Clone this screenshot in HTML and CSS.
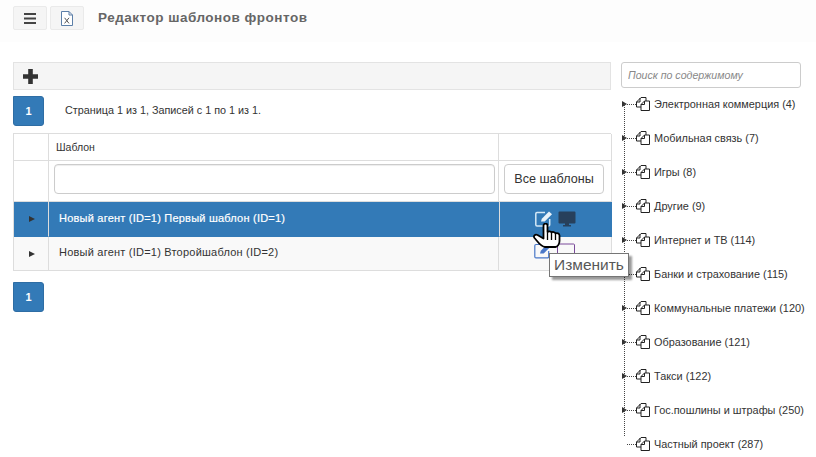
FILE: index.html
```html
<!DOCTYPE html>
<html lang="ru">
<head>
<meta charset="utf-8">
<title>Редактор шаблонов фронтов</title>
<link rel="stylesheet" href="styles.css">
</head>
<body>
<svg class="defs" width="0" height="0"><defs>
  <g id="doc"><path d="M.5 5L5 .5h5V4M.5 5v5H5M.5 5H4V1" stroke="#222" fill="#fff"/><path d="M5 7.500L8.500 4h5v9.500H5zM5 7.500h3.500V4" stroke="#222" fill="#fff"/></g>
</defs></svg>
<header class="topbar">
  <button class="tool-btn" type="button" aria-label="Меню">
    <svg width="12" height="11" viewBox="0 0 12 11"><path d="M0 1h12M0 5.500h12M0 10h12" stroke="#444" stroke-width="2" fill="none"/></svg>
  </button>
  <button class="tool-btn" type="button" aria-label="Excel">
    <svg width="12" height="15" viewBox="0 0 12 15"><path d="M.5.500h7.500l3.500 3.500v10.500H.5z M8 .5V4h3.500" stroke="#5c7fa8" fill="#fff"/><path d="M3.600 6.800l4.400 5.600M8 6.800l-4.400 5.600" stroke="#555" stroke-width="1" fill="none"/></svg>
  </button>
  <h1 class="title">Редактор шаблонов фронтов</h1>
</header>
<div class="layout">
  <main class="main">
    <div class="actions">
      <svg width="15" height="15" viewBox="0 0 15 15"><path d="M5.200 0h4.600v5.200H15v4.600H9.800V15H5.200V9.800H0V5.200h5.200z" fill="#333"/></svg>
    </div>
    <div class="pager-row">
      <a class="page">1</a>
      <span class="pager-info">Страница 1 из 1, Записей с 1 по 1 из 1.</span>
    </div>
    <div class="grid">
      <div class="cell head"></div>
      <div class="cell head name">Шаблон</div>
      <div class="cell head"></div>

      <div class="cell filter"></div>
      <div class="cell filter input-cell"><input class="input" type="text"></div>
      <div class="cell filter btn-cell"><button class="all-btn" type="button">Все шаблоны</button></div>

      <div class="cell row active arrow"><i class="tri"></i></div>
      <div class="cell row active name">Новый агент (ID=1) Первый шаблон (ID=1)</div>
      <div class="cell row active icons">
        <svg width="18" height="16" viewBox="0 0 18 16"><path d="M10 1.500H2A1.200 1.200 0 0 0 .8 2.700v11A1.200 1.200 0 0 0 2 14.900h11.500a1.200 1.200 0 0 0 1.200-1.200V8" stroke="#d4e8f6" stroke-width="1.500" fill="none"/><path d="M6 10.500l.8-2.800L14 .5l3 2.700-7.300 7.300z" fill="#e8f2fa"/></svg>
        <svg width="18" height="16" viewBox="0 0 18 16"><path d="M1.500 .5h15a1 1 0 0 1 1 1v10a1 1 0 0 1-1 1h-15a1 1 0 0 1-1-1v-10a1 1 0 0 1 1-1z M7 12.500h4v1.500h2v1.500H5V14h2z" fill="#27405c"/></svg>
      </div>

      <div class="cell row arrow"><i class="tri"></i></div>
      <div class="cell row name second">Новый агент (ID=1) Второйшаблон (ID=2)</div>
      <div class="cell row icons second-icons">
        <svg width="18" height="16" viewBox="0 0 18 16"><path d="M10 1.500H2A1.200 1.200 0 0 0 .8 2.700v11A1.200 1.200 0 0 0 2 14.900h11.500a1.200 1.200 0 0 0 1.200-1.200V8" stroke="#4a78c8" stroke-width="1.200" fill="none"/><path d="M6 10.500l.8-2.800L14 .5l3 2.700-7.300 7.300z" fill="#4a78c8"/></svg>
        <svg width="18" height="16" viewBox="0 0 18 16"><rect x=".5" y="1" width="17" height="11.500" rx="1" stroke="#7a4a9a" fill="none"/></svg>
      </div>
    </div>
    <a class="page bottom">1</a>
  </main>
  <aside class="side">
    <input class="search" type="text" placeholder="Поиск по содержимому">
    <ul class="tree">
      <li class="node"><i class="exp"></i><i class="dash"></i><svg class="doc" width="14" height="14" viewBox="0 0 14 14"><use href="#doc"/></svg><span>Электронная коммерция (4)</span></li>
      <li class="node"><i class="exp"></i><i class="dash"></i><svg class="doc" width="14" height="14" viewBox="0 0 14 14"><use href="#doc"/></svg><span>Мобильная связь (7)</span></li>
      <li class="node"><i class="exp"></i><i class="dash"></i><svg class="doc" width="14" height="14" viewBox="0 0 14 14"><use href="#doc"/></svg><span>Игры (8)</span></li>
      <li class="node"><i class="exp"></i><i class="dash"></i><svg class="doc" width="14" height="14" viewBox="0 0 14 14"><use href="#doc"/></svg><span>Другие (9)</span></li>
      <li class="node"><i class="exp"></i><i class="dash"></i><svg class="doc" width="14" height="14" viewBox="0 0 14 14"><use href="#doc"/></svg><span>Интернет и ТВ (114)</span></li>
      <li class="node"><i class="exp"></i><i class="dash"></i><svg class="doc" width="14" height="14" viewBox="0 0 14 14"><use href="#doc"/></svg><span>Банки и страхование (115)</span></li>
      <li class="node"><i class="exp"></i><i class="dash"></i><svg class="doc" width="14" height="14" viewBox="0 0 14 14"><use href="#doc"/></svg><span>Коммунальные платежи (120)</span></li>
      <li class="node"><i class="exp"></i><i class="dash"></i><svg class="doc" width="14" height="14" viewBox="0 0 14 14"><use href="#doc"/></svg><span>Образование (121)</span></li>
      <li class="node"><i class="exp"></i><i class="dash"></i><svg class="doc" width="14" height="14" viewBox="0 0 14 14"><use href="#doc"/></svg><span>Такси (122)</span></li>
      <li class="node"><i class="exp"></i><i class="dash"></i><svg class="doc" width="14" height="14" viewBox="0 0 14 14"><use href="#doc"/></svg><span>Гос.пошлины и штрафы (250)</span></li>
      <li class="node last"><i class="exp none"></i><i class="dash"></i><svg class="doc" width="14" height="14" viewBox="0 0 14 14"><use href="#doc"/></svg><span>Частный проект (287)</span></li>
    </ul>
  </aside>
</div>
<svg class="cursor" width="30" height="25" viewBox="0 0 30 25"><path d="M10.500 2.500c0-2.500 4-2.500 4 0V9c1-1 3.500-1 4 .5 1-1 3.500-.5 4 1 1.500-.8 4 0 4 2V18c0 3-2 6-4 6H12C8 24 5 19 1.500 15c-1.500-2 .5-4 3-3l6 3.500z" fill="#fff" stroke="#000" stroke-width="1.800" stroke-linejoin="round"/><path d="M14.500 10v7M18.500 10v7M22.500 11v6" stroke="#000" stroke-width="1.300"/></svg>
<div class="tooltip">Изменить</div>
</body>
</html>
```
FILE: styles.css
```css
* { box-sizing: border-box; }
html, body { margin: 0; padding: 0; }
body {
  position: relative;
  width: 816px;
  height: 457px;
  overflow: hidden;
  background: #fff;
  font-family: "Liberation Sans", Arial, sans-serif;
  font-size: 11px;
  color: #333;
}
.defs { position: absolute; }
.topbar {
  height: 42px;
  background: #fdfdfd;
  padding: 6px 0 0 13px;
  display: flex;
  align-items: flex-start;
  gap: 3px;
}
.tool-btn {
  width: 34px;
  height: 24px;
  padding: 0;
  background: #f5f5f5;
  border: 1px solid #eaeaea;
  border-radius: 2px;
  display: flex;
  align-items: center;
  justify-content: center;
}
.title {
  margin: 0 0 0 11px;
  font-size: 13.5px;
  line-height: 24px;
  font-weight: bold;
  color: #666;
  letter-spacing: .5px;
}
.layout {
  display: flex;
  padding: 20px 0 0 13px;
  gap: 10px;
}
.main { width: 598px; }
.actions {
  height: 28px;
  background: #f5f5f5;
  border: 1px solid #e3e3e3;
  padding: 0 0 0 9px;
  display: flex;
  align-items: center;
}
.pager-row {
  display: flex;
  align-items: center;
  margin-top: 6px;
}
.page {
  display: flex;
  align-items: center;
  justify-content: center;
  width: 31px;
  height: 30px;
  background: #337ab7;
  border: 1px solid #2e6da4;
  border-radius: 0 3px 3px 3px;
  color: #fff;
  font-weight: bold;
  font-size: 11px;
}
.pager-info {
  margin-left: 21px;
  padding-bottom: 2px;
  font-size: 10.8px;
  color: #333;
}
.grid {
  display: grid;
  grid-template-columns: 35px 450px 113px;
  grid-template-rows: 27px 41px 35px 34px;
  margin-top: 7px;
  border-top: 1px solid #ddd;
  border-left: 1px solid #ddd;
}
.cell {
  border-right: 1px solid #ddd;
  border-bottom: 1px solid #ddd;
  display: flex;
  align-items: center;
}
.cell.head.name { padding-left: 7px; font-size: 10.5px; }
.input-cell { padding: 3px 3px 0 5px; align-items: flex-start; }
.input {
  width: 100%;
  height: 30px;
  border: 1px solid #ccc;
  border-radius: 4px;
  background: #fff;
  box-shadow: inset 0 1px 1px rgba(0,0,0,.075);
}
.btn-cell { padding: 3px 7px 0 5px; align-items: flex-start; }
.all-btn {
  width: 100%;
  height: 30px;
  padding: 0;
  background: #fff;
  border: 1px solid #ccc;
  border-radius: 4px;
  font-family: "Liberation Sans", Arial, sans-serif;
  font-size: 12.6px;
  color: #333;
}
.row { background: #f9f9f9; }
.row.name { padding: 0 0 2px 10px; letter-spacing: .22px; }
.row.name.second { padding-bottom: 3px; }
.row.active { background: #337ab7; color: #fff; font-weight: bold; border-color: #337ab7; }
.row.active.name { font-weight: normal; -webkit-text-stroke: .2px #fff; }
.row.active.arrow { border-right-color: #ddd; }
.row.active.icons { border-left: 1px solid #ddd; }
.arrow { justify-content: center; }
.tri {
  width: 0;
  height: 0;
  border-left: 6px solid #333;
  border-top: 3.5px solid transparent;
  border-bottom: 3.5px solid transparent;
  margin-left: 1px;
}
.icons { justify-content: center; gap: 5px; padding-right: 1px; }
.second-icons { padding-bottom: 5px; }
.bottom { margin-top: 11px; }
.side { width: 180px; }
.search {
  display: block;
  width: 180px;
  height: 26px;
  padding: 0 6px;
  border: 1px solid #ccc;
  border-radius: 3px;
  background: #fff;
  font-family: "Liberation Sans", Arial, sans-serif;
  font-size: 10.6px;
  font-style: italic;
}
.search::placeholder { color: #888; opacity: 1; }
.tree {
  list-style: none;
  margin: -1px 0 0 0;
  padding: 0;
}
.node {
  position: relative;
  height: 34px;
  display: flex;
  align-items: center;
  white-space: nowrap;
  font-size: 10.9px;
  color: #333;
  width: 195px;
}
.node:not(.last)::before {
  content: "";
  position: absolute;
  left: 3px;
  top: 17px;
  height: 34px;
  border-left: 1px dotted #444;
}
.node:nth-last-child(2)::before { height: 26px; }
.node.last::before { content: none; }
.exp {
  width: 0;
  height: 0;
  border-left: 5px solid #333;
  border-top: 3.5px solid transparent;
  border-bottom: 3.5px solid transparent;
  flex: none;
  margin-left: 1px;
}
.exp.none { border-left-color: transparent; }
.dash {
  width: 9px;
  border-top: 1px dotted #444;
  flex: none;
}
.doc { flex: none; margin-right: 4px; }
.cursor { position: absolute; left: 533px; top: 223px; }
.tooltip {
  position: absolute;
  left: 549px;
  top: 253px;
  width: 80px;
  height: 24px;
  background: #fff;
  border: 1px solid #767676;
  box-shadow: 3px 3px 2px rgba(0,0,0,.4);
  color: #575757;
  font-size: 15.5px;
  line-height: 22px;
  text-align: center;
}
```
